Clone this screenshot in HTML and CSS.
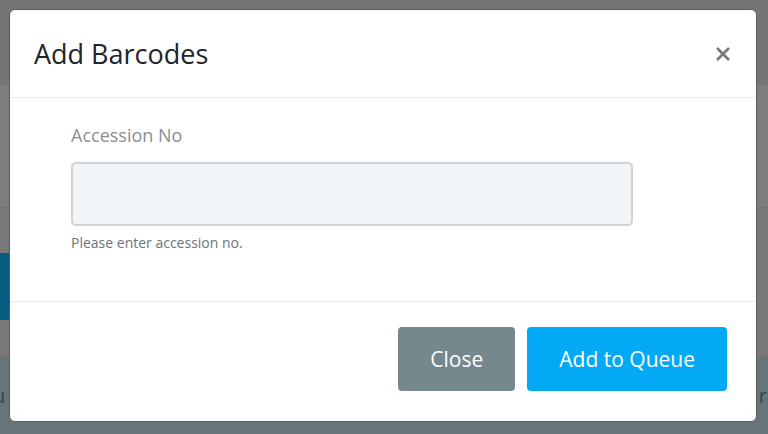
FILE: index.html
```html
<!DOCTYPE html>
<html lang="en">
<head>
<meta charset="utf-8">
<title>Add Barcodes</title>
<link rel="stylesheet" href="styles.css">
</head>
<body>
<div class="page">
  <div class="band band-top"></div>
  <div class="band band-mid"></div>
  <div class="band band-row">
    <div class="side-blue"></div>
  </div>
  <div class="band band-bottom">
    <span class="frag frag-left">u</span>
    <span class="frag frag-right">ra</span>
  </div>
</div>

<div class="modal" role="dialog" aria-labelledby="modal-title">
  <div class="modal-header">
    <h2 class="modal-title" id="modal-title">Add Barcodes</h2>
    <button class="modal-close" type="button" aria-label="Close">
      <svg width="16" height="16" viewBox="0 0 16 16" aria-hidden="true">
        <path d="M2 2 L14 14 M14 2 L2 14" stroke="#777" stroke-width="2.6" stroke-linecap="butt" fill="none"/>
      </svg>
    </button>
  </div>
  <div class="modal-body">
    <div class="form-group">
      <label class="form-label" for="acc">Accession No</label>
      <input class="form-input" id="acc" type="text">
      <div class="form-help">Please enter accession no.</div>
    </div>
  </div>
  <div class="modal-footer">
    <button class="btn btn-secondary" type="button">Close</button>
    <button class="btn btn-primary" type="button">Add to Queue</button>
  </div>
</div>
</body>
</html>
```

FILE: styles.css
```css
* { box-sizing: border-box; }

html, body {
  margin: 0;
  padding: 0;
  width: 768px;
  height: 434px;
  overflow: hidden;
  font-family: "Open Sans", "Noto Sans", sans-serif;
}

.page {
  display: flex;
  flex-direction: column;
  width: 768px;
  height: 434px;
}

.band-top {
  height: 85px;
  background: #757575;
}

.band-mid {
  height: 123px;
  background: #7d7d7d;
  border-bottom: 1px solid #747474;
}

.band-row {
  height: 149px;
  background: #787878;
  padding-top: 45px;
}

.side-blue {
  width: 10px;
  height: 67px;
  background: #065b81;
}

.band-bottom {
  flex: 1;
  background: #667678;
  display: flex;
  justify-content: space-between;
  align-items: flex-start;
  padding-top: 24px;
  overflow: hidden;
}

.frag {
  font-size: 20px;
  line-height: 30px;
  color: #2f4756;
}

.frag-left { margin-left: -7px; }
.frag-right { margin-right: -10px; }

.modal {
  position: absolute;
  left: 9px;
  top: 9px;
  width: 748px;
  height: 413px;
  background: #fff;
  border: 1px solid #5c5c5c;
  border-radius: 6px;
  display: flex;
  flex-direction: column;
}

.modal-header {
  display: flex;
  align-items: center;
  justify-content: space-between;
  padding: 24px 24px 24px 24px;
  border-bottom: 1px solid #e6e9ed;
}

.modal-title {
  margin: 0;
  font-size: 27px;
  line-height: 39px;
  font-weight: 400;
  color: #212529;
}

.modal-close {
  border: 0;
  background: transparent;
  padding: 0;
  margin-right: 1px;
  width: 16px;
  height: 16px;
  display: flex;
  cursor: pointer;
}

.modal-body {
  padding: 24px 24px 48px 61px;
  border-bottom: 1px solid #e6e9ed;
}

.form-group {
  width: 562px;
  display: flex;
  flex-direction: column;
}

.form-label {
  font-size: 18px;
  line-height: 27px;
  color: #8b8f93;
  margin-bottom: 13px;
}

.form-input {
  height: 64px;
  width: 100%;
  background: #f2f5f8;
  border: 2px solid #cfd3d8;
  border-radius: 5px;
  font-family: inherit;
  font-size: 18px;
  padding: 0 16px;
  outline: none;
}

.form-help {
  margin-top: 6px;
  font-size: 14px;
  line-height: 21px;
  color: #6c737a;
}

.modal-footer {
  flex: 1;
  display: flex;
  justify-content: flex-end;
  align-items: flex-start;
  gap: 12px;
  padding: 25px 29px 0 0;
}

.btn {
  height: 64px;
  padding: 0 32px;
  border: 0;
  border-radius: 4px;
  font-family: inherit;
  font-size: 21px;
  color: #fff;
  cursor: pointer;
}

.btn-secondary { background: #76878e; }
.btn-primary { background: #03a9f4; }
```
